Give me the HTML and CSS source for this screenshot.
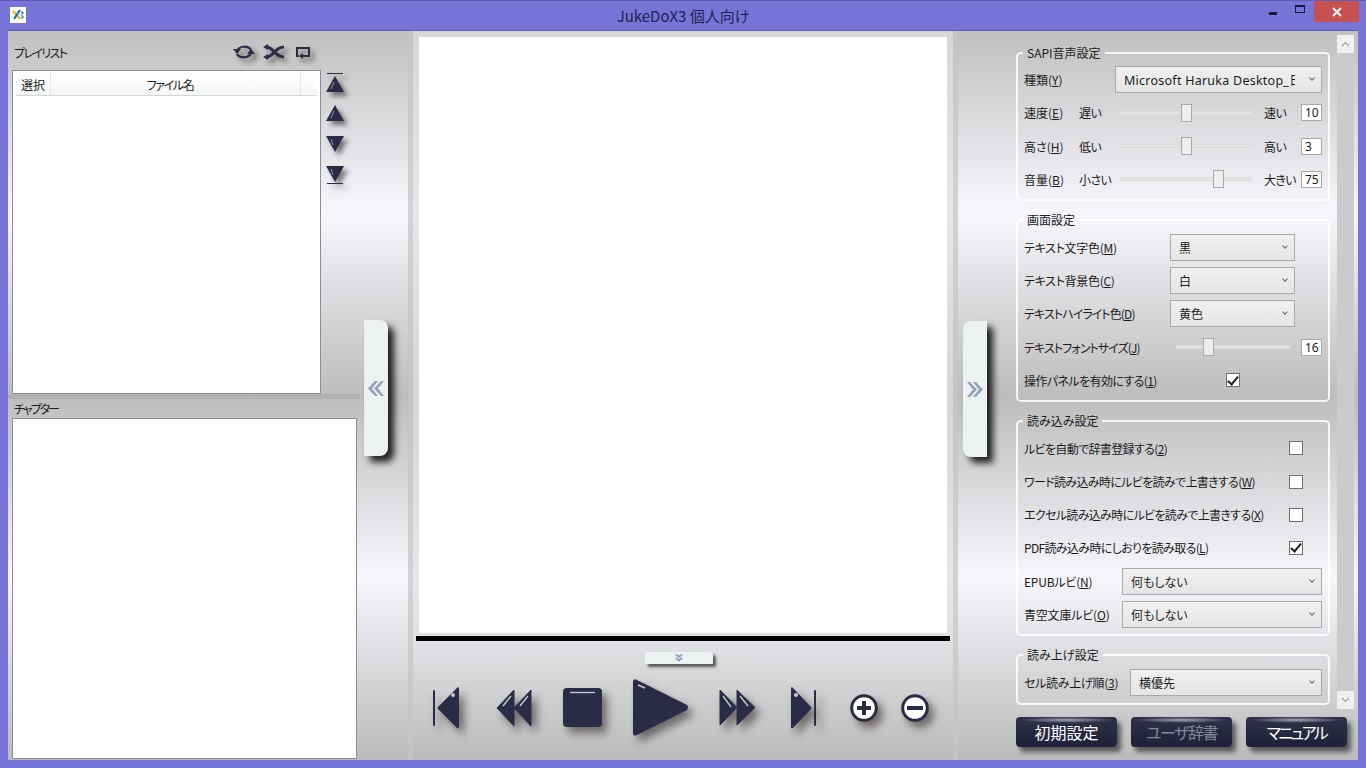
FILE: index.html
```html
<!DOCTYPE html>
<html lang="ja">
<head>
    <meta charset="UTF-8">
    <title>JukeDoX3 個人向け</title>
    <link rel="stylesheet" href="styles.css">
</head>
<body>
    <div class="window">
        <div class="titlebar">
            <div class="app-icon">
                <svg width="12" height="12" viewBox="0 0 12 12">
                    <path d="M1 2 L8 10" stroke="#e8b820" stroke-width="2.4" fill="none"/>
                    <path d="M8 1 L2 10" stroke="#1c6fc0" stroke-width="2.2" fill="none"/>
                    <path d="M9 3 h2 v2 h-2 M9 7 h2 v2 h-2" stroke="#1c6fc0" stroke-width="1" fill="none"/>
                </svg>
            </div>
            <div class="title">JukeDoX3 個人向け</div>
            <div class="win-btn win-min"><span></span></div>
            <div class="win-btn win-max"><span></span></div>
            <div class="win-btn win-close">
                <svg width="10" height="10" viewBox="0 0 10 10"><path d="M1 1 L9 9 M9 1 L1 9" stroke="#fff" stroke-width="1.8"/></svg>
            </div>
        </div>

        <div class="client">
            <!-- playlist -->
            <div class="left-panel">
                <div class="playlist-head">
                    <span class="playlist-label">プレイリスト</span>
                    <div class="mode-icons">
                        <svg class="shadowed" width="22" height="16" viewBox="0 0 22 16">
                            <path d="M4 7 C6 2 15 1 18 6" stroke="#2a2c46" stroke-width="2.2" fill="none"/>
                            <path d="M0 5 L8 5 L4 10 Z" fill="#2a2c46"/>
                            <path d="M18 9 C16 14 7 15 4 10" stroke="#2a2c46" stroke-width="2.2" fill="none"/>
                            <path d="M22 10 L14 10 L18 5 Z" fill="#2a2c46"/>
                        </svg>
                        <svg class="shadowed" width="22" height="16" viewBox="0 0 22 16">
                            <path d="M4 3 C10 3 12 13 21 13 M4 13 C10 13 12 3 21 3" stroke="#2a2c46" stroke-width="3" fill="none"/>
                            <path d="M0 3 L5 0 L5 6 Z M0 13 L5 10 L5 16 Z" fill="#2a2c46"/>
                        </svg>
                        <svg class="shadowed icon-loop" width="16" height="16" viewBox="0 0 16 16">
                            <path d="M4 12 H2 V4 H14 V12 H8" stroke="#2a2c46" stroke-width="2" fill="none"/>
                            <path d="M8 9 L8 15 L4 12 Z" fill="#2a2c46"/>
                        </svg>
                    </div>
                </div>
                <div class="playlist-row">
                    <div class="list playlist">
                        <div class="list-header">
                            <div class="col col-check">選択</div>
                            <div class="col col-name">ファイル名</div>
                            <div class="col col-rest"></div>
                        </div>
                    </div>
                    <div class="order-icons">
                        <svg class="shadowed" width="20" height="20" viewBox="0 0 20 20">
                            <path d="M2 .5 H18" stroke="#2a2c46" stroke-width="1"/>
                            <path d="M10 3 L19 19 H1 Z" fill="#2a2c46"/>
                            <path d="M6 16 L9 9" stroke="#8d90a8" stroke-width="1"/>
                        </svg>
                        <svg class="shadowed" width="20" height="18" viewBox="0 0 20 18">
                            <path d="M10 1 L19 17 H1 Z" fill="#2a2c46"/>
                            <path d="M6 14 L9 7" stroke="#8d90a8" stroke-width="1"/>
                        </svg>
                        <svg class="shadowed" width="20" height="18" viewBox="0 0 20 18">
                            <path d="M1 1 H19 L10 17 Z" fill="#2a2c46"/>
                            <path d="M6 4 L8 10" stroke="#8d90a8" stroke-width="1"/>
                        </svg>
                        <svg class="shadowed" width="20" height="18" viewBox="0 0 20 18">
                            <path d="M1 0 H19 L10 16 Z" fill="#2a2c46"/>
                            <path d="M6 3 L8 9" stroke="#8d90a8" stroke-width="1"/>
                            <path d="M2 17.5 H18" stroke="#2a2c46" stroke-width="1"/>
                        </svg>
                    </div>
                </div>
                <div class="hsplit"></div>
                <div class="chapter-label">チャプター</div>
                <div class="list chapters"></div>
                <div class="side-tab side-tab-left">
                    <svg width="16" height="15" viewBox="0 0 16 15"><path d="M16 0 H13 L6 7.500 L13 15 H16 L10 7.500 Z M10 0 H7 L0 7.500 L7 15 H10 L4 7.500 Z" fill="#95a1bd"/></svg>
                </div>
            </div>

            <div class="vsplit"></div>

            <!-- viewer -->
            <div class="center-panel">
                <div class="viewer">
                    <div class="page"></div>
                    <div class="black-bar"></div>
                </div>
                <div class="player">
                    <div class="drop-tab">
                        <svg width="8" height="8" viewBox="0 0 8 8"><path d="M1 0.500 L4 3 L7 0.500 M1 4 L4 6.500 L7 4" stroke="#95a1bd" stroke-width="2" fill="none"/></svg>
                    </div>
                    <div class="transport">
                        <svg class="shadowed big-shadow t-prev" width="26" height="42" viewBox="0 0 26 42">
                            <rect x="0" y="3" width="2" height="36" rx="1" fill="#2a2c46"/>
                            <path d="M25 0 Q26 0 26 2 V40 Q26 42 24 41 L5 22 Q4 21 5 20 L24 1 Z" fill="#2a2c46"/>
                            <circle cx="20" cy="8" r="2" fill="#c6c8d4"/>
                        </svg>
                        <svg class="shadowed big-shadow t-rew" width="34" height="36" viewBox="0 0 34 36">
                            <path d="M17 0 V36 L0 18 Z M34 0 V36 L17 18 Z" fill="#2a2c46" stroke="#2a2c46" stroke-linejoin="round"/>
                            <path d="M6 16 L14 6 M23 16 L31 6" stroke="#c6c8d4" stroke-width="1.4"/>
                        </svg>
                        <svg class="shadowed big-shadow t-stop" width="39" height="39" viewBox="0 0 39 39">
                            <rect width="39" height="39" rx="4" fill="#2a2c46"/>
                            <path d="M7 4.5 H32" stroke="#c6c8d4" stroke-width="1.4"/>
                        </svg>
                        <svg class="shadowed big-shadow t-play" width="56" height="57" viewBox="0 0 56 57">
                            <path d="M0 3 Q0 -1 4 1 L54 26 Q56 28.500 54 31 L4 56 Q0 58 0 54 Z" fill="#2a2c46"/>
                            <path d="M5 6 L12 9" stroke="#c6c8d4" stroke-width="1.6"/>
                        </svg>
                        <svg class="shadowed big-shadow t-ff" width="35" height="35" viewBox="0 0 35 35">
                            <path d="M0 0 V35 L17 17.500 Z M17 0 V35 L35 17.500 Z" fill="#2a2c46" stroke="#2a2c46" stroke-linejoin="round"/>
                            <path d="M3 6 L11 17 M20 6 L28 16" stroke="#c6c8d4" stroke-width="1.4"/>
                        </svg>
                        <svg class="shadowed big-shadow t-next" width="25" height="42" viewBox="0 0 25 42">
                            <path d="M1 0 Q0 0 0 2 V40 Q0 42 2 41 L20 22 Q21 21 20 20 L2 1 Z" fill="#2a2c46"/>
                            <rect x="23" y="3" width="2" height="36" rx="1" fill="#2a2c46"/>
                            <circle cx="5" cy="8" r="2" fill="#c6c8d4"/>
                        </svg>
                        <svg class="shadowed big-shadow t-plus" width="28" height="28" viewBox="0 0 28 28">
                            <circle cx="14" cy="14" r="12.300" fill="#fff" stroke="#2a2c46" stroke-width="3"/>
                            <path d="M14 7 V21 M7 14 H21" stroke="#2a2c46" stroke-width="4"/>
                        </svg>
                        <svg class="shadowed big-shadow t-minus" width="28" height="28" viewBox="0 0 28 28">
                            <circle cx="14" cy="14" r="12.300" fill="#fff" stroke="#2a2c46" stroke-width="3"/>
                            <path d="M6 14 H22" stroke="#2a2c46" stroke-width="4"/>
                        </svg>
                    </div>
                </div>
            </div>

            <div class="vsplit"></div>

            <!-- settings -->
            <div class="right-panel">
                <div class="side-tab side-tab-right">
                    <svg width="16" height="15" viewBox="0 0 16 15"><path d="M0 0 H3 L10 7.500 L3 15 H0 L6 7.500 Z M6 0 H9 L16 7.500 L9 15 H6 L12 7.500 Z" fill="#95a1bd"/></svg>
                </div>
                <div class="settings-row">
                    <div class="groups">
                        <fieldset class="group">
                            <legend>SAPI音声設定</legend>
                            <div class="row">
                                <span class="label w-type">種類(<u>Y</u>)</span>
                                <div class="combo combo-voice"><span class="combo-text">Microsoft Haruka Desktop_日本語</span><span class="chev"></span></div>
                            </div>
                            <div class="row">
                                <span class="label w-short">速度(<u>E</u>)</span><span class="label w-low">遅い</span>
                                <div class="slider slider-voice"><div class="thumb" style="left: 46%"></div></div>
                                <span class="label w-high">速い</span><div class="num">10</div>
                            </div>
                            <div class="row">
                                <span class="label w-short">高さ(<u>H</u>)</span><span class="label w-low">低い</span>
                                <div class="slider slider-voice"><div class="thumb" style="left: 46%"></div></div>
                                <span class="label w-high">高い</span><div class="num">3</div>
                            </div>
                            <div class="row">
                                <span class="label w-short">音量(<u>B</u>)</span><span class="label w-low">小さい</span>
                                <div class="slider slider-voice"><div class="thumb" style="left: 71%"></div></div>
                                <span class="label w-high">大きい</span><div class="num">75</div>
                            </div>
                        </fieldset>

                        <fieldset class="group">
                            <legend>画面設定</legend>
                            <div class="row">
                                <span class="label w-screen">テキスト文字色(<u>M</u>)</span>
                                <div class="combo combo-screen"><span class="combo-text">黒</span><span class="chev"></span></div>
                            </div>
                            <div class="row">
                                <span class="label w-screen">テキスト背景色(<u>C</u>)</span>
                                <div class="combo combo-screen"><span class="combo-text">白</span><span class="chev"></span></div>
                            </div>
                            <div class="row">
                                <span class="label w-screen tight">テキストハイライト色(<u>D</u>)</span>
                                <div class="combo combo-screen"><span class="combo-text">黄色</span><span class="chev"></span></div>
                            </div>
                            <div class="row">
                                <span class="label w-screen tight">テキストフォントサイズ(<u>J</u>)</span>
                                <div class="slider slider-font"><div class="thumb" style="left: 23.500%"></div></div>
                                <div class="num">16</div>
                            </div>
                            <div class="row">
                                <span class="label w-panel">操作パネルを有効にする(<u>1</u>)</span>
                                <div class="check checked"></div>
                            </div>
                        </fieldset>

                        <fieldset class="group">
                            <legend>読み込み設定</legend>
                            <div class="row">
                                <span class="label w-read">ルビを自動で辞書登録する(<u>2</u>)</span>
                                <div class="check"></div>
                            </div>
                            <div class="row">
                                <span class="label w-read">ワード読み込み時にルビを読みで上書きする(<u>W</u>)</span>
                                <div class="check"></div>
                            </div>
                            <div class="row">
                                <span class="label w-read">エクセル読み込み時にルビを読みで上書きする(<u>X</u>)</span>
                                <div class="check"></div>
                            </div>
                            <div class="row">
                                <span class="label w-read">PDF読み込み時にしおりを読み取る(<u>L</u>)</span>
                                <div class="check checked"></div>
                            </div>
                            <div class="row">
                                <span class="label w-ruby">EPUBルビ(<u>N</u>)</span>
                                <div class="combo combo-ruby"><span class="combo-text">何もしない</span><span class="chev"></span></div>
                            </div>
                            <div class="row">
                                <span class="label w-ruby">青空文庫ルビ(<u>O</u>)</span>
                                <div class="combo combo-ruby"><span class="combo-text">何もしない</span><span class="chev"></span></div>
                            </div>
                        </fieldset>

                        <fieldset class="group">
                            <legend>読み上げ設定</legend>
                            <div class="row">
                                <span class="label w-cell">セル読み上げ順(<u>3</u>)</span>
                                <div class="combo combo-cell"><span class="combo-text">横優先</span><span class="chev"></span></div>
                            </div>
                        </fieldset>
                    </div>
                    <div class="scrollbar">
                        <div class="scroll-btn"><svg width="9" height="6" viewBox="0 0 9 6"><path d="M1 5 L4.500 1.500 L8 5" stroke="#a8a8a8" stroke-width="1.300" fill="none"/></svg></div>
                        <div class="scroll-btn"><svg width="9" height="6" viewBox="0 0 9 6"><path d="M1 1 L4.500 4.500 L8 1" stroke="#a8a8a8" stroke-width="1.300" fill="none"/></svg></div>
                    </div>
                </div>
                <div class="actions">
                    <div class="action-btn">初期設定</div>
                    <div class="action-btn disabled">ユーザ辞書</div>
                    <div class="action-btn kana">マニュアル</div>
                </div>
            </div>
        </div>
    </div>
</body>
</html>
```

FILE: styles.css
```css
:root {
    --frame: #7674d6;
    --navy: #2a2c46;
    --line: #a9a9a9;
}

* {
    margin: 0;
    padding: 0;
    box-sizing: border-box;
}

body {
    width: 1366px;
    height: 768px;
    overflow: hidden;
    font-family: "Noto Sans CJK JP", "Noto Sans", sans-serif;
    font-size: 12px;
    font-feature-settings: "palt";
    color: #1c1c1c;
}

.window {
    width: 1366px;
    height: 768px;
    background: var(--frame);
    border-top: 1px solid #5f5db6;
    padding: 0 8px 8px;
    display: flex;
    flex-direction: column;
}

/* title bar */
.titlebar {
    height: 30px;
    display: flex;
    align-items: flex-start;
    position: relative;
}

.app-icon {
    width: 16px;
    height: 16px;
    margin: 6px 0 0 2px;
    background: #fff;
    display: flex;
    align-items: center;
    justify-content: center;
}

.title {
    position: absolute;
    left: 0;
    right: 0;
    top: 5px;
    text-align: center;
    font-size: 15px;
    line-height: 20px;
    color: #1d2350;
}

.win-btn {
    display: flex;
    align-items: center;
    justify-content: center;
    height: 21px;
}

.win-min {
    width: 26px;
    margin-left: auto;
}

.win-min span {
    width: 8px;
    height: 3px;
    background: #15183a;
    margin: 4px 3px 0 0;
}

.win-max {
    width: 27px;
}

.win-max span {
    width: 10px;
    height: 8px;
    border: 1px solid #15183a;
    border-top-width: 2px;
    margin: 0 2px 6px 0;
}

.win-close {
    width: 45px;
    background: #c75050;
    margin-right: -1px;
}

.client {
    flex: 1;
    min-height: 0;
    display: grid;
    grid-template-columns: 400px 5px 540px 5px 400px;
    background: linear-gradient(180deg, #c0c0c0 0%, #f6f6fc 25%, #bdbdbd 50%, #f6f6fc 75%, #bbbbbb 100%);
    box-shadow: 0 -1px 0 #5f5db6;
}

.vsplit {
    background: rgba(198, 198, 198, 0.75);
}

/* left side */
.left-panel {
    position: relative;
    padding-left: 4px;
    display: flex;
    flex-direction: column;
}

.playlist-head {
    height: 39px;
    display: flex;
    align-items: center;
    padding: 3px 0 0 2px;
}

.playlist-label {
    width: 219px;
    letter-spacing: -1.6px;
}

.mode-icons {
    display: flex;
    gap: 8px;
}

.icon-loop {
    margin-left: 2px;
}

.shadowed {
    filter: drop-shadow(4px 4px 2.500px rgba(40, 35, 35, 0.6));
    overflow: visible;
    flex: none;
}

.big-shadow {
    filter: drop-shadow(5px 6px 4px rgba(50, 40, 40, 0.6));
}

.playlist-row {
    height: 324px;
    display: flex;
}

.list {
    background: #fff;
    border: 1px solid #8a8d98;
}

.playlist {
    width: 309px;
    padding: 1px 3px;
}

.list-header {
    display: flex;
    height: 24px;
    border-bottom: 1px solid #d3d6da;
    background: linear-gradient(180deg, #fff, #f4f6f6);
}

.col {
    text-align: center;
    line-height: 25px;
    border-right: 1px solid #e3e5e7;
}

.col-check {
    width: 35px;
}

.col-name {
    width: 250px;
    letter-spacing: -1.400px;
    padding-right: 11px;
}

.col-rest {
    flex: 1;
    border-right: 0;
}

.order-icons {
    padding: 3px 0 0 4px;
    display: flex;
    flex-direction: column;
    gap: 13px;
}

.order-icons svg:first-child {
    margin-bottom: -2px;
}

.hsplit {
    height: 5px;
    width: 352px;
    margin-left: -4px;
    background: rgba(0, 0, 0, 0.06);
}

.chapter-label {
    height: 19px;
    line-height: 19px;
    padding-left: 2px;
    letter-spacing: -2px;
}

.list.chapters {
    width: 345px;
    flex: 1;
    margin-bottom: 1px;
}

.side-tab {
    position: absolute;
    width: 24px;
    height: 136px;
    background: #ecf1f2;
    display: flex;
    align-items: center;
    justify-content: center;
    box-shadow: 6px 6px 7px rgba(0, 0, 0, 0.85);
}

.side-tab-left {
    left: 356px;
    top: 289px;
    border-radius: 0 8px 8px 0;
}

.side-tab-right {
    left: 5px;
    top: 290px;
    border-radius: 8px 0 0 8px;
}

/* center */
.center-panel {
    display: flex;
    flex-direction: column;
}

.viewer {
    height: 610px;
    padding: 6px 3px 0;
    background: rgba(224, 224, 224, 0.7);
}

.page {
    height: 596px;
    margin: 0 3px;
    background: #fff;
}

.black-bar {
    height: 5px;
    margin-top: 3px;
    background: #000;
}

.player {
    flex: 1;
    padding-top: 11px;
    display: flex;
    flex-direction: column;
}

.drop-tab {
    width: 68px;
    height: 12px;
    margin-left: 232px;
    background: #ecf1f2;
    border-radius: 3px 3px 0 0;
    box-shadow: 3px 3px 3px rgba(0, 0, 0, 0.6);
    display: flex;
    align-items: center;
    justify-content: center;
}

.transport {
    display: flex;
    align-items: center;
    margin-top: 15px;
    height: 57px;
    padding-left: 20px;
}

.t-rew { margin-left: 38px; }
.t-stop { margin-left: 32px; }
.t-play { margin-left: 31px; }
.t-ff { margin-left: 31px; }
.t-next { margin-left: 36px; }
.t-plus { margin-left: 34px; }
.t-minus { margin-left: 23px; }

/* settings */
.right-panel {
    position: relative;
    display: flex;
    flex-direction: column;
}

.settings-row {
    display: flex;
    height: 678px;
    padding-top: 4px;
}

.groups {
    width: 314px;
    margin: 9.600px 0 0 58px;
    display: flex;
    flex-direction: column;
    gap: 11px;
}

.group {
    border: 2px solid rgba(255, 255, 255, 0.85);
    border-radius: 5px;
    padding: 2.500px 6px 3.500px;
}

.group legend {
    margin-left: -1px;
    padding: 0 4px;
    line-height: 16px;
}

.row {
    height: 33.200px;
    display: flex;
    align-items: center;
}

.label {
    flex: none;
    white-space: nowrap;
}

.label.w-type { width: 91px; }
.label.w-short { width: 55px; }
.label.w-low { width: 41px; letter-spacing: -0.600px; }
.label.w-high { width: 37px; letter-spacing: -0.600px; }
.label.w-screen { width: 146px; letter-spacing: -0.300px; }
.label.w-screen.tight { letter-spacing: -0.900px; }
.label.w-panel { width: 202px; letter-spacing: -0.600px; }
.label.w-read { width: 265px; letter-spacing: -0.650px; }
.label.w-ruby { width: 98px; letter-spacing: -0.200px; }
.label.w-cell { width: 106px; letter-spacing: -0.300px; }

.combo {
    height: 27px;
    display: flex;
    align-items: center;
    justify-content: space-between;
    padding: 0 7px 0 8px;
    background: linear-gradient(180deg, #f0f0f0, #e5e5e5);
    border: 1px solid var(--line);
    overflow: hidden;
}

.combo-text {
    white-space: nowrap;
    overflow: hidden;
}

.chev {
    flex: none;
    width: 4px;
    height: 4px;
    margin: 0 0 3px 5px;
    border-right: 1px solid #666;
    border-bottom: 1px solid #666;
    transform: rotate(45deg);
}

.combo-voice {
    width: 207px;
}

.combo-voice .combo-text {
    flex: 1;
    margin-right: 10px;
    font-size: 12.500px;
    letter-spacing: 0.250px;
    font-family: "Noto Sans", "Noto Sans CJK JP", sans-serif;
}

.combo-screen {
    width: 125px;
}

.combo-ruby {
    width: 200px;
}

.combo-cell {
    width: 192px;
}

.slider {
    position: relative;
    height: 4px;
    background: #e1e5e4;
    border: 1px solid #d8dcdb;
}

.slider-voice {
    width: 132px;
    margin-right: 12px;
}

.slider-font {
    width: 114px;
    margin: 0 11px 0 6px;
}

.thumb {
    position: absolute;
    top: -8px;
    width: 11px;
    height: 18px;
    background: #eeeeee;
    border: 1px solid var(--line);
}

.num {
    width: 21px;
    height: 17px;
    flex: none;
    background: #fff;
    border: 1px solid var(--line);
    line-height: 15px;
    padding-left: 3px;
    font-family: "Noto Sans", sans-serif;
    font-size: 12px;
}

.check {
    width: 14px;
    height: 14px;
    flex: none;
    background: #fff;
    border: 1px solid #707070;
    display: flex;
    align-items: center;
    justify-content: center;
}

.check.checked::before {
    content: "";
    width: 4px;
    height: 9px;
    margin-top: -2px;
    border-right: 2px solid #222;
    border-bottom: 2px solid #222;
    transform: rotate(40deg);
}

.scrollbar {
    width: 17px;
    margin-left: 7px;
    background: #cbcbcb;
    display: flex;
    flex-direction: column;
    justify-content: space-between;
}

.scroll-btn {
    height: 18px;
    background: #f0f0f0;
    display: flex;
    align-items: center;
    justify-content: center;
}

.actions {
    display: flex;
    gap: 14px;
    margin: 8px 0 0 58px;
}

.action-btn {
    width: 101px;
    height: 30px;
    border-radius: 4px;
    text-align: center;
    font-size: 16px;
    line-height: 31px;
    color: #fff;
    background: radial-gradient(ellipse 46% 3px at 50% 3px, rgba(200, 200, 215, 0.75), transparent), linear-gradient(180deg, #2f3149, #1f2139);
    box-shadow: 4px 5px 5px rgba(0, 0, 0, 0.55);
}

.action-btn.kana {
    letter-spacing: -2.500px;
}

.action-btn.disabled {
    color: #85889a;
    letter-spacing: -1.500px;
}
```
